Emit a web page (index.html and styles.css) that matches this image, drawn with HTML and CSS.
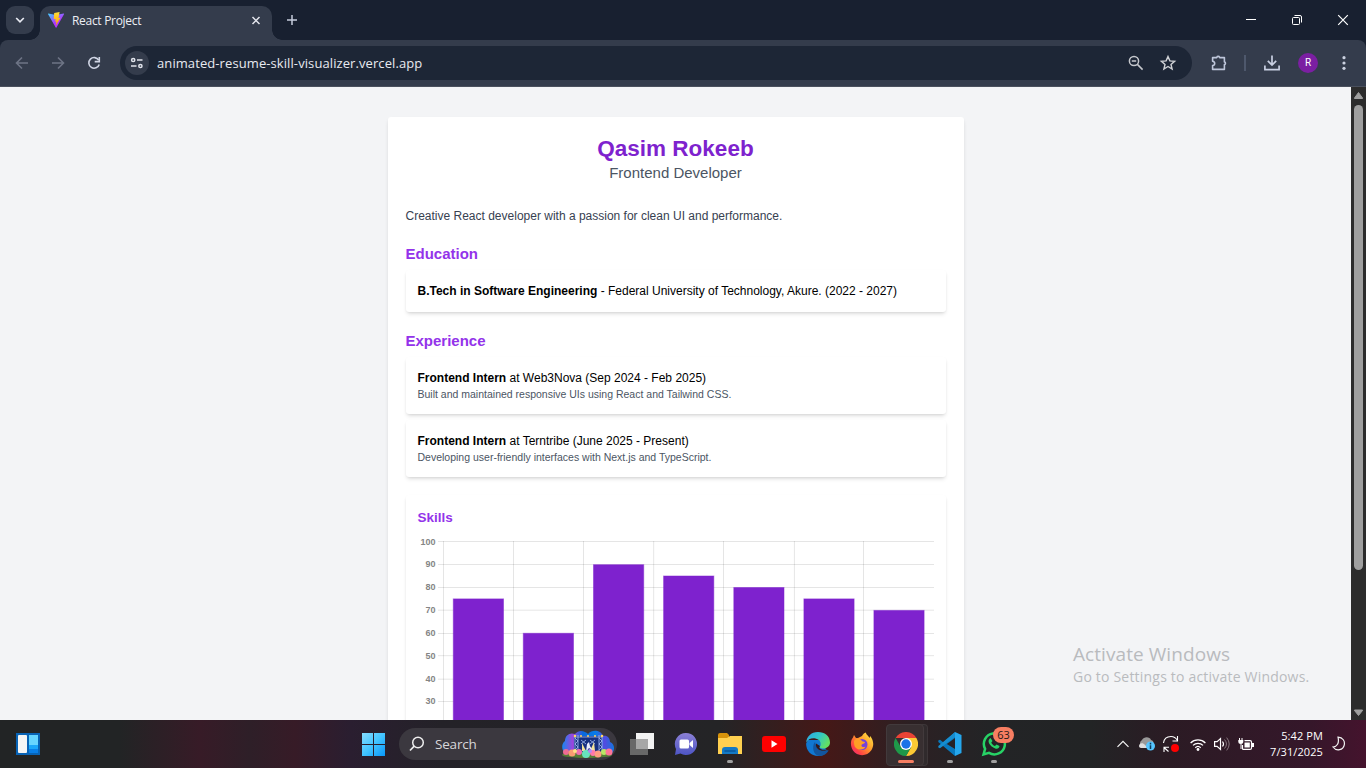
FILE: index.html
```html
<!DOCTYPE html>
<html lang="en">
<head>
<meta charset="utf-8">
<title>React Project</title>
<link rel="stylesheet" href="styles.css">
</head>
<body>
<header class="tabstrip">
  <button class="tab-search"><svg width="28" height="28" viewBox="0 0 28 28"><path d="M10.2 12l3.8 3.8 3.8-3.8" fill="none" stroke="#e8eaf2" stroke-width="1.700"/></svg></button>
  <div class="tab">
    <svg class="favicon" width="16" height="16" viewBox="0 0 16 16">
      <defs>
        <linearGradient id="vite" x1="0" y1="0" x2=".7" y2="1"><stop offset="0" stop-color="#41d1ff"/><stop offset=".65" stop-color="#b134ff"/></linearGradient>
        <linearGradient id="bolt" x1="0" y1="0" x2="0" y2="1"><stop offset="0" stop-color="#ffe03a"/><stop offset="1" stop-color="#ff9d00"/></linearGradient>
      </defs>
      <path d="M.4 1.500L8 3l7.600-1.500c.4 0 .6.4.4.700L8.500 15.600c-.2.300-.6.300-.8 0L.1 2.200c-.2-.3 0-.7.3-.7z" fill="url(#vite)"/>
      <path d="M11.600 0L6.200 1l-.5 6.300 2-.4-.6 2.800 1.300-.3-.7 4.300 4.800-8-2 .3z" fill="url(#bolt)"/>
    </svg>
    <span class="tab-title">React Project</span>
    <svg width="16" height="16" viewBox="0 0 16 16"><path d="M4.500 4l7 7m0-7l-7 7" stroke="#e3e5ec" stroke-width="1.500"/></svg>
  </div>
  <svg class="new-tab" width="20" height="20" viewBox="0 0 20 20"><path d="M10 5v10M5 10h10" stroke="#c5cbdc" stroke-width="1.500"/></svg>
  <div class="window-controls">
    <svg width="46" height="40" viewBox="0 0 46 40"><path d="M18 19.500h10" stroke="#fff"/></svg>
    <svg width="46" height="40" viewBox="0 0 46 40"><rect x="18.500" y="17.500" width="7" height="7" rx="1" fill="none" stroke="#fff"/><path d="M20.500 15.500H26q1.500 0 1.500 1.500v5.500" fill="none" stroke="#fff"/></svg>
    <svg width="46" height="40" viewBox="0 0 46 40"><path d="M18.200 15.200l9.600 9.600m0-9.600l-9.600 9.600" stroke="#fff" stroke-width="1.200"/></svg>
  </div>
</header>

<nav class="toolbar">
  <svg class="nav-icon" viewBox="0 0 20 20"><path d="M16 10H4.600M10 4.500L4.500 10l5.500 5.500" fill="none" stroke="#6d7485" stroke-width="1.600"/></svg>
  <svg class="nav-icon" viewBox="0 0 20 20"><path d="M4 10h11.400M10 4.500l5.500 5.500-5.500 5.500" fill="none" stroke="#6d7485" stroke-width="1.600"/></svg>
  <svg class="nav-icon" viewBox="0 0 20 20"><path d="M14.700 7.200A5.300 5.300 0 1 0 15.200 11.400" fill="none" stroke="#d0d5e4" stroke-width="1.600"/><path d="M15.300 4v4.600h-4.600" fill="none" stroke="#d0d5e4" stroke-width="1.600"/></svg>
  <div class="omnibox">
    <span class="site-info"><svg width="14" height="12" viewBox="0 0 14 12"><g fill="none" stroke="#e1e4ec" stroke-width="1.500"><circle cx="3.200" cy="3" r="1.600"/><path d="M7 3h5.500M1 9h5.500"/><circle cx="10.400" cy="9" r="1.600"/></g></svg></span>
    <span class="url">animated-resume-skill-visualizer.vercel.app</span>
    <svg class="box-icon" viewBox="0 0 20 20"><g fill="none" stroke="#c6c8cd" stroke-width="1.500"><circle cx="8" cy="8" r="4.600"/><path d="M11.400 11.400l5.200 5.200M5.800 8h4.400"/></g></svg>
    <svg class="box-icon star" viewBox="0 0 20 20"><path d="M10 3.600l1.900 4.300 4.700.4-3.600 3.100 1.100 4.600-4.100-2.500L5.900 16 7 11.400 3.400 8.300l4.700-.4z" fill="none" stroke="#d0d2d6" stroke-width="1.400"/></svg>
  </div>
  <svg class="tool-icon" viewBox="0 0 20 20"><path d="M4.600 4.600h4.200v-.3a1.500 1.500 0 0 1 2.800 0v.3h4.800v4.300h.3a1.500 1.500 0 0 1 0 2.600h-.3v4.900H4.600v-3.800c2.800-.5 2.800-3.900 0-4.400z" fill="none" stroke="#bec6da" stroke-width="1.600" stroke-linejoin="round"/></svg>
  <span class="divider"></span>
  <svg class="tool-icon download" viewBox="0 0 20 20"><path d="M10 2.500v9M5.800 7.800L10 12l4.200-4.200M2.900 12.500v4.200h14.200v-4.200" fill="none" stroke="#c8cfe2" stroke-width="1.700"/></svg>
  <span class="avatar">R</span>
  <svg class="tool-icon menu" viewBox="0 0 20 20"><g fill="#cbd1e0"><circle cx="10" cy="4.700" r="1.600"/><circle cx="10" cy="10" r="1.600"/><circle cx="10" cy="15.300" r="1.600"/></g></svg>
</nav>

<main class="viewport">
  <div class="page">
    <article class="resume">
      <h1 class="name">Qasim Rokeeb</h1>
      <p class="role">Frontend Developer</p>
      <p class="summary">Creative React developer with a passion for clean UI and performance.</p>
      <h2 class="section-title">Education</h2>
      <div class="card"><p><strong>B.Tech in Software Engineering</strong> - Federal University of Technology, Akure. (2022 - 2027)</p></div>
      <h2 class="section-title">Experience</h2>
      <div class="card"><p><strong>Frontend Intern</strong> at Web3Nova (Sep 2024 - Feb 2025)</p><p class="detail">Built and maintained responsive UIs using React and Tailwind CSS.</p></div>
      <div class="card"><p><strong>Frontend Intern</strong> at Terntribe (June 2025 - Present)</p><p class="detail">Developing user-friendly interfaces with Next.js and TypeScript.</p></div>
      <section class="card skills">
        <h3 class="skills-title">Skills</h3>
        <svg class="chart" width="516" height="258" viewBox="418 534 516 258">
          <path d="M438 541.500h496M438 564.500h496M438 587.500h496M438 610.200h496M438 633.500h496M438 655.700h496M438 679.200h496M438 701.500h496M438 724.500h496M443.500 541v250M513.500 541v250M583.500 541v250M653.700 541v250M723.500 541v250M794.400 541v250M863.500 541v250" stroke="#000" stroke-opacity=".1" fill="none"/>
          <g fill="#7e22ce" stroke="#7e22ce" stroke-opacity=".5">
            <rect x="453.300" y="598.900" width="50.200" height="200"/><rect x="523.300" y="633.300" width="50.200" height="200"/><rect x="593.500" y="564.700" width="50.200" height="200"/><rect x="663.600" y="576" width="50.200" height="220"/><rect x="733.800" y="587.500" width="50.200" height="210"/><rect x="803.900" y="598.900" width="50.200" height="200"/><rect x="873.900" y="610.400" width="50.200" height="200"/>
          </g>
          <g class="axis-labels"><text x="435.500" y="544.500">100</text><text x="435.500" y="567">90</text><text x="435.500" y="590">80</text><text x="435.500" y="613">70</text><text x="435.500" y="636">60</text><text x="435.500" y="658.500">50</text><text x="435.500" y="681.800">40</text><text x="435.500" y="704">30</text></g>
        </svg>
      </section>
    </article>
  </div>
  <div class="scrollbar">
    <svg width="15" height="18" viewBox="0 0 15 18"><path d="M7.500 5.500L11.500 11v.5h-8V11z" fill="#9f9f9f" stroke="#9f9f9f" stroke-linejoin="round"/></svg>
    <span class="thumb"></span>
    <svg class="down" width="15" height="15" viewBox="0 0 15 15"><path d="M3.500 5h8v.5l-4 5-4-5z" fill="#9f9f9f" stroke="#9f9f9f" stroke-linejoin="round"/></svg>
  </div>
  <aside class="watermark"><p class="wm-title">Activate Windows</p><p class="wm-text">Go to Settings to activate Windows.</p></aside>
</main>

<footer class="taskbar">
  <svg class="widgets" width="24" height="22" viewBox="0 0 24 22"><rect width="24" height="22" fill="#0863b5"/><rect x="2" y="2" width="9" height="18" rx="1" fill="#f5f5f5"/><path d="M13 2h9v10h-9z" fill="#66d5ff"/><path d="M13 12h9v4h-9z" fill="#1aa7fa"/><path d="M13 16h9v4h-9z" fill="#087fe8"/></svg>
  <svg class="start" width="23" height="23" viewBox="0 0 23 23"><defs><linearGradient id="win" x1="0" y1="0" x2="1" y2="1"><stop offset="0" stop-color="#85dcff"/><stop offset=".5" stop-color="#42c4ff"/><stop offset="1" stop-color="#0896fa"/></linearGradient></defs><path d="M0 0h11v11H0zM12 0h11v11H12zM0 12h11v11H0zM12 12h11v11H12z" fill="url(#win)"/></svg>
  <div class="search">
    <svg width="16" height="16" viewBox="0 0 16 16"><circle cx="9" cy="6.500" r="5.300" fill="none" stroke="#eee" stroke-width="1.500"/><path d="M5.200 10.200L1 14.500" stroke="#eee" stroke-width="1.700"/></svg>
    <span class="search-label">Search</span>
    <svg width="54" height="29" viewBox="0 0 54 29">
      <defs><linearGradient id="sky" x1="0" x2="1"><stop offset="0" stop-color="#1587f2"/><stop offset=".2" stop-color="#9b45dd"/><stop offset=".4" stop-color="#0869df"/><stop offset=".65" stop-color="#087ce8"/><stop offset=".82" stop-color="#544be0"/><stop offset="1" stop-color="#1475dd"/></linearGradient></defs>
      <path d="M3 22C0 18 1 13 4 11c0-6 5-9 10-7 4-5 10-3 13 0 4-5 13-4 15 2 4-1 7 2 7 6 5 2 5 8 2 11z" fill="url(#sky)"/>
      <path d="M13 6h28v16H13z" fill="#173180"/>
      <path d="M14 5v17M17 5v17M38 5v17M41 5v17M13 7h28M14 8l3 3-3 3 3 3-3 3M38 8l3 3-3 3 3 3-3 3M20 10l5 4m0-4l-5 4M29 10l5 4m0-4l-5 4" stroke="#a7bef4" stroke-width=".8" fill="none"/>
      <path d="M21 13l4 8h-4zM33 12l-4 9h5z" fill="#f2e39c"/><path d="M26 14l2-2 1 4 3 5-4-3-3 4z" fill="#e9ecff"/>
      <g fill="#ffd466"><circle cx="14" cy="6" r="1.300"/><circle cx="20" cy="6" r="1"/><circle cx="27" cy="6" r="1"/><circle cx="34" cy="6" r="1"/><circle cx="41" cy="6" r="1.300"/></g>
      <ellipse cx="26" cy="25" rx="25" ry="3" fill="#547c35"/>
      <g><circle cx="5" cy="22" r="3" fill="#ef6b94"/><circle cx="11" cy="23" r="3.500" fill="#fa9b72"/><circle cx="18" cy="22" r="3" fill="#f16fb1"/><circle cx="25" cy="24" r="4" fill="#67e4bd"/><circle cx="32" cy="23" r="3" fill="#ff77aa"/><circle cx="37" cy="24" r="3.500" fill="#ff9d82"/><circle cx="43" cy="22" r="3" fill="#b8e665"/><circle cx="48" cy="22" r="3.500" fill="#ff7499"/><circle cx="14" cy="21" r="2" fill="#ffe184"/><circle cx="29" cy="21" r="2" fill="#b28af1"/></g>
    </svg>
  </div>
  <span class="app"><svg width="24" height="22" viewBox="0 0 24 22"><path d="M6 0h18v16H6z" fill="#f2f2f2"/><path d="M0 6h18v16H0z" fill="#686868"/><path d="M6 6h12v10H6z" fill="#a6a6a6"/></svg></span>
  <span class="app"><svg width="24" height="24" viewBox="0 0 24 24"><defs><linearGradient id="chat" x1="0" y1="0" x2="0" y2="1"><stop offset="0" stop-color="#8c80d5"/><stop offset="1" stop-color="#4d55c5"/></linearGradient></defs><path d="M12 1a11 11 0 1 1-5.500 20.500L1 23l1-6A11 11 0 0 1 12 1z" fill="url(#chat)"/><rect x="5.500" y="7.500" width="9.500" height="9" rx="1.500" fill="#fff"/><path d="M15.500 11l3.500-3v8l-3.500-3z" fill="#fff"/></svg></span>
  <span class="app running"><svg width="24" height="24" viewBox="0 0 24 24"><path d="M0 3q0-2 2-2h7l2 2v5H0z" fill="#d7930b"/><path d="M0 6h9l3-2h12v18H0z" fill="#ffd050"/><path d="M4 22v-4q0-3 3-3h10q3 0 3 3v4z" fill="#1479c4"/><path d="M7 19h10" stroke="#07569b" stroke-width="1.500" stroke-linecap="round"/></svg></span>
  <span class="app"><svg width="24" height="16" viewBox="0 0 24 16"><rect width="24" height="16" rx="3" fill="#f00"/><path d="M9.500 4.200v7.600l6-3.800z" fill="#fff"/></svg></span>
  <span class="app"><svg width="24" height="24" viewBox="0 0 24 24"><defs><linearGradient id="edge" x1="0" y1="0" x2="1" y2=".5"><stop offset="0" stop-color="#2ba4e8"/><stop offset=".55" stop-color="#32c7c4"/><stop offset="1" stop-color="#63df63"/></linearGradient></defs><path d="M.1 11.500C0 18.500 5 24 12 24c4 0 7.500-2 9.500-5L13 8H2z" fill="#1177d1"/><path d="M9 10C5 15 8 24 13.500 24c3.500 0 7-2 9-5.300.2-.4-.1-.6-.5-.4-5.500 2-10 .3-12-4.800z" fill="#12559e"/><path d="M10 11.500c-1 5 4.500 8.500 10 7 1.500-.5 1-1 .5-1-3 .8-6 .2-7-1.500-.5-.8.300-1 .5-2z" fill="#351717"/><path d="M12 0C5 0 .4 5 .2 10.500 2 7 6 5.500 9.500 6.500c4 1 5.700 4 5 7-.2 1-1 1.200-.5 2 2 2.500 10 .8 10-5C24 4 18.500 0 12 0z" fill="url(#edge)"/></svg></span>
  <span class="app"><svg width="24" height="24" viewBox="0 0 24 24"><defs><linearGradient id="fox" x1="1" y1="0" x2="0" y2="1"><stop offset="0" stop-color="#fff04a"/><stop offset=".45" stop-color="#ff9829"/><stop offset=".75" stop-color="#ff4245"/><stop offset="1" stop-color="#e6228b"/></linearGradient></defs><path d="M4 3l2 3 2-.1L12 4c1-2 2-3 4-3.500-.3 2 2 3 3.500 5.500l.7-2C24 9 24 14 21.500 18 17 25 7 24.500 3 18.500 0 14 .5 8 3 5.500z" fill="url(#fox)"/><circle cx="12" cy="12.500" r="5.500" fill="#7542db"/><path d="M4 9c2-3 6-3 8 0 1 1 3 .6 3 1.300-.3 1.700-3 1.400-3.500 2.700-.5 1.500 2 3 4 1.500-1 4-8 4-10.500.5C4 13 4 11 4 9z" fill="#ff9f25"/></svg></span>
  <span class="app active"><svg width="24" height="24" viewBox="0 0 24 24"><path d="M1.600 6A12 12 0 0 1 22.400 6H12z" fill="#e94335"/><path d="M22.400 6A12 12 0 0 1 12 24l5.200-9L12 6z" fill="#fcc934"/><path d="M12 24A12 12 0 0 1 1.600 6l5.200 9L12 18l5.200-3z" fill="#1e9949"/><circle cx="12" cy="12" r="6" fill="#fff"/><circle cx="12" cy="12" r="4.700" fill="#1a73e8"/></svg></span>
  <span class="app running"><svg width="24" height="24" viewBox="0 0 24 24"><path d="M17 0L5.500 10.500 2 7.800.3 8.600v1.300l16.700 14V17L8.800 12 17 6z" fill="#0878bd"/><path d="M.3 14v1.400l1.700.8L17 5V0L.3 14z" fill="#168dcf"/><path d="M17 0l6.500 3v18L17 24z" fill="#25a7ed"/></svg></span>
  <span class="app running"><svg width="26" height="26" viewBox="0 0 26 26"><path d="M2.500 23.500l1.600-5.700A10.500 10.500 0 1 1 8 21.900z" fill="none" stroke="#27d366" stroke-width="2.500"/><path d="M9.500 7c-4 2.500-1 7 2 9 4 3 6.500 2 7-1l-3-1.500-1.500 1.600c-2-1-3-2-3.700-3.700L11.500 10z" fill="#27d366"/></svg><b class="badge">63</b></span>
  <div class="tray">
    <svg width="12" height="8" viewBox="0 0 12 8"><path d="M.5 6.800L6 1.300l5.500 5.500" fill="none" stroke="#f5f5f5" stroke-width="1.200"/></svg>
    <svg class="cloud" width="18" height="14" viewBox="0 0 18 14"><path d="M4 10a4 4 0 0 1 0-7c2-4 8-3.500 9 0 3 .5 3 4 2 7z" fill="#999"/><path d="M1 9c0-3 4-4 6-1l3 3H3C2 11 1 10 1 9z" fill="#ddd"/><circle cx="12.500" cy="9" r="4.500" fill="#55c5ff"/><path d="M12.500 5.800v1.600M12.500 8.200V12" stroke="#0d3a58" stroke-width="1.500"/></svg>
    <svg class="sync" width="18" height="18" viewBox="0 0 18 18"><path d="M1.500 8C2 3.500 5.500 1.500 9 1.500c3 0 5 1.500 6.500 4M15.500 1v5h-5M6.500 16.500L2 12.500M2 17v-4.700h5" fill="none" stroke="#fff" stroke-width="1.100"/><circle cx="13" cy="13" r="4" fill="red"/></svg>
    <svg class="wifi" width="16" height="13" viewBox="0 0 16 13"><path d="M.6 5a10.500 10.500 0 0 1 14.800 0M3 7.400a7 7 0 0 1 10 0M5.300 9.700a3.900 3.900 0 0 1 5.400 0" fill="none" stroke="#fff" stroke-width="1.300"/><circle cx="8" cy="11.500" r="1.400" fill="#fff"/></svg>
    <svg class="volume" width="16" height="14" viewBox="0 0 16 14"><path d="M.6 4.600h2.500L6.500 1.500v11L3.100 9.400H.6z" fill="none" stroke="#fff" stroke-width="1.200"/><path d="M8.500 4.500q2 2.500 0 5" fill="none" stroke="#fff" stroke-width="1.200"/><path d="M10.500 2.500q4 4.500 0 9M12.700.6q5 6.400 0 12.800" fill="none" stroke="#86767e"/></svg>
    <svg class="battery" width="16" height="13" viewBox="0 0 16 13"><path d="M1.500 0v2.500M4 0v2.500M3 5.500V11" stroke="#fff"/><path d="M.3 2h5v2q0 2-2.500 2T.3 4z" fill="#fff"/><path d="M6.500 2.600H12q1.500 0 1.500 1.500v5.800q0 1.500-1.500 1.500H5.500q-1 0-1-1V7" fill="none" stroke="#fff" stroke-width="1.200"/><path d="M6.500 4.500h5.300v5H6.500zM14 5h2v4h-2z" fill="#fff"/></svg>
    <div class="clock"><span>5:42 PM</span><span class="date">7/31/2025</span></div>
    <svg class="moon" width="14" height="16" viewBox="0 0 14 16"><path d="M6 1.200c5 .3 7 4 6.300 7.600C11.200 14 4.500 15.800 1 11c4-.3 6.500-3.700 5-9.800z" fill="none" stroke="#f2f2f2" stroke-width="1.200"/></svg>
  </div>
</footer>
</body>
</html>
```
FILE: styles.css
```css
* { box-sizing: border-box; }
body { margin: 0; width: 1366px; height: 768px; overflow: hidden; display: flex; flex-direction: column; background: #182030; font-family: "Open Sans", "Noto Sans", sans-serif; }
h1, h2, h3, p { margin: 0; }
svg { display: block; flex: none; }

/* Browser chrome */
.tabstrip { height: 40px; flex: none; display: flex; background: #182030; padding-left: 6px; }
.tab-search { width: 28px; height: 28px; margin: 6px 6px 0 0; padding: 0; border: 0; border-radius: 9px; background: #343c4c; }
.tab { position: relative; width: 232px; margin-top: 6px; height: 34px; padding: 0 8px 5px; display: flex; align-items: center; background: #343c4c; border-radius: 10px 10px 0 0; }
.tab::before, .tab::after { content: ""; position: absolute; bottom: 0; width: 10px; height: 10px; }
.tab::before { left: -10px; background: radial-gradient(circle at 0 0, transparent 9.500px, #343c4c 10px); }
.tab::after { right: -10px; background: radial-gradient(circle at 100% 0, transparent 9.500px, #343c4c 10px); }
.favicon { margin-top: -1px; }
.tab-title { flex: 1; margin-left: 8px; font-size: 12px; letter-spacing: -.3px; color: #eceef4; }
.new-tab { margin: 10px 0 0 10px; }
.window-controls { margin-left: auto; display: flex; }
.toolbar { height: 47px; flex: none; display: flex; align-items: center; padding: 0 12px; background: #343c4c; border-radius: 8px 8px 0 0; border-bottom: 1px solid #4a505d; }
.nav-icon { width: 20px; height: 20px; margin-right: 16px; }
.omnibox { width: 1072px; height: 34px; display: flex; align-items: center; padding: 0 14px 0 5px; border-radius: 17px; background: #1d2636; }
.site-info { width: 24px; height: 24px; border-radius: 50%; background: #343c4c; display: grid; place-items: center; }
.url { flex: 1; margin-left: 8px; font-size: 13px; letter-spacing: .09px; color: #e8eaf0; }
.box-icon { width: 20px; height: 20px; }
.star { margin-left: 12px; }
.tool-icon { width: 20px; height: 20px; margin-left: 16px; }
.divider { width: 2px; height: 16px; margin-left: 16px; background: #4e586c; }
.avatar { width: 20px; height: 20px; margin-left: 16px; border-radius: 50%; background: #7b1fa2; color: #fff; font: 10px/20px Roboto, sans-serif; text-align: center; }

/* Web page */
.viewport { position: relative; height: 633px; flex: none; display: flex; overflow: hidden; background: #f3f4f6; }
.page { flex: 1; padding: 30px 0 0; display: flex; justify-content: center; align-items: flex-start; }
.resume { width: 576px; height: 800px; padding: 18px; border-radius: 3px; background: #fff; box-shadow: 0 3px 5px -1px rgba(0,0,0,.1), 0 1px 3px -1px rgba(0,0,0,.1); font: 12px/18px "Liberation Sans", Arial, sans-serif; color: #000; }
.name { font-size: 22.500px; line-height: 27px; text-align: center; color: #7e22ce; }
.role { font-size: 15px; line-height: 21px; text-align: center; color: #4b5563; }
.summary { margin-top: 24px; color: #374151; }
.section-title { margin: 18px 0 6px; font-size: 15px; line-height: 21px; color: #9333ea; }
.card { padding: 12px; border-radius: 3px; background: #fff; box-shadow: 0 3px 4px -1px rgba(0,0,0,.12), 0 1px 3px -1px rgba(0,0,0,.12); }
.card + .card { margin-top: 6px; }
.detail { font-size: 10.500px; line-height: 15px; color: #4b5563; }
.card + .skills { margin-top: 18px; height: 320px; }
.skills-title { font-size: 13.500px; line-height: 21px; color: #9333ea; margin-bottom: 6px; }
.axis-labels { font: bold 9px "Liberation Sans", Arial, sans-serif; fill: #858585; text-anchor: end; }
.scrollbar { width: 15px; background: #2c2c2c; display: flex; flex-direction: column; align-items: center; }
.thumb { width: 9px; height: 465px; border-radius: 5px; background: #9f9f9f; }
.down { margin-top: auto; }
.watermark { position: absolute; left: 1073px; top: 555px; color: #b9bbbe; white-space: nowrap; }
.wm-title { font-size: 19px; line-height: 25px; letter-spacing: .07px; }
.wm-text { font-size: 14px; line-height: 20px; letter-spacing: .2px; }

/* Taskbar */
.taskbar { height: 48px; flex: none; display: flex; align-items: center; padding-left: 16px; background: linear-gradient(90deg, #222425 0, #222425 120px, #371b27 200px, #2e1f28 250px, #371b27 295px, #2a1e30 350px, #242228 440px, #242426 720px, #451817 825px, #2c2023 910px, #232426 990px, #222425 1090px, #2b1b24 1170px, #35172a 1310px, #45132d 1366px); }
.start { margin-left: 322px; }
.search { width: 218px; height: 32px; margin-left: 14px; border-radius: 16px; background: #3b383f; display: flex; align-items: center; padding-left: 10px; }
.search-label { width: 126px; margin-left: 10px; font-size: 13.500px; letter-spacing: -.2px; color: #d7d6d9; }
.search + .app { margin-left: 3px; }
.app { position: relative; width: 44px; height: 48px; flex: none; display: grid; place-items: center; }
.running::after, .active::after { content: ""; position: absolute; left: 19px; bottom: 5px; width: 6px; height: 3px; border-radius: 2px; background: #a0a0a0; }
.active { height: 40px; border-radius: 4px; }
.active svg { position: relative; }
.active::before { content: ""; position: absolute; left: 2px; top: 0; width: 36px; height: 40px; border: 1px solid #423a3c; border-radius: 4px; background: #382f31; box-shadow: 4px 0 0 -1px #302a2c, 4px 0 0 #3d3638; }
.active::after { left: 14px; bottom: 1px; width: 16px; background: #f77e62; }
.badge { position: absolute; left: 21px; top: 7px; width: 21px; height: 16px; border-radius: 8px; background: #f77e62; color: #241918; font-size: 11px; font-weight: 400; line-height: 16px; text-align: center; }
.tray { margin-left: auto; padding-right: 20px; display: flex; align-items: center; color: #fff; }
.cloud { margin-left: 9px; }
.sync { margin-left: 6px; }
.wifi { margin-left: 10px; }
.volume { margin-left: 8px; }
.battery { margin-left: 8px; }
.clock { width: 60px; margin-left: 9px; display: flex; flex-direction: column; align-items: flex-end; font-size: 11px; line-height: 16px; letter-spacing: .1px; white-space: nowrap; }
.moon { margin-left: 9px; }
```
